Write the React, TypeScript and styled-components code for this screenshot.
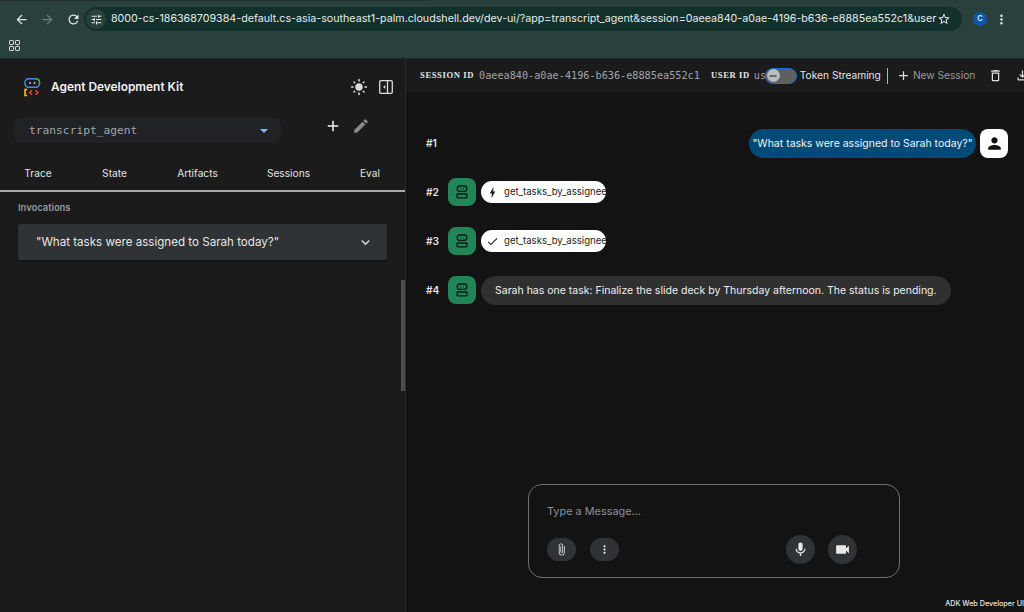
import React from "react";
import styled, { createGlobalStyle } from "styled-components";
import {
  MdArrowBack, MdArrowForward, MdRefresh, MdTune, MdStarBorder, MdMoreVert, MdAdd, MdEdit,
  MdOutlineDelete, MdOutlineFileDownload, MdMic, MdVideocam, MdAttachFile, MdKeyboardArrowDown,
  MdPerson, MdCheck, MdBolt, MdLightMode, MdRemove,
} from "react-icons/md";

const Global = createGlobalStyle`
  html, body { margin: 0; padding: 0; width: 1024px; height: 612px; overflow: hidden; background: #131314; }
  * { box-sizing: border-box; }
  body { font-family: "Inter", "Roboto", "Liberation Sans", sans-serif; }
`;

const Page = styled.div`
  width: 1024px; height: 612px; display: flex; flex-direction: column; overflow: hidden; position: relative;
`;
const BrowserChrome = styled.header`
  height: 59px; flex: none; background: #2a403d; display: flex; flex-direction: column; border-bottom: 1px solid #1d2a29;
`;
const TabEdge = styled.div`
  height: 1px; width: 430px; background: #1f2f2d; flex: none;
`;
const ToolbarRow = styled.div`
  height: 28px; margin-top: 4px; display: flex; align-items: center; padding: 0 0 0 8px; color: #dfe5e4;
`;
const NavButton = styled.span<{ $dim?: boolean }>`
  width: 26px; height: 24px; display: flex; align-items: center; justify-content: center; flex: none;
  color: ${p => (p.$dim ? "#71807e" : "#dfe5e4")}; font-size: 15px;
`;
const AddressBar = styled.div`
  margin-left: -2px; width: 878px; height: 24px; background: #12302c; border-radius: 12px; display: flex; align-items: center;
  padding-right: 11px; flex: none;
`;
const SiteChip = styled.span`
  width: 20px; height: 20px; margin-left: 2px; margin-right: 5px; border-radius: 50%; background: #2a403d; display: flex; align-items: center; justify-content: center;
  font-size: 13px; color: #e3e8e7; flex: none;
`;
const Url = styled.span`
  font: 400 10.7px/24px "Inter", sans-serif; color: #e6ebea; white-space: nowrap; flex: 1; overflow: hidden; letter-spacing: 0;
`;
const Star = styled.span`
  font-size: 14px; display: flex; color: #e6ebea;
`;
const ProfileChip = styled.span`
  margin-left: 11px; width: 14px; height: 14px; border-radius: 50%; background: #0b57a4; color: #dfeaf5; font: 600 7.5px/14px "Inter", sans-serif; text-align: center; flex: none;
`;
const Kebab = styled.span`
  margin-left: 7px; font-size: 15px; display: flex; color: #dfe5e4;
`;
const BookmarksRow = styled.div`
  height: 24px; display: flex; align-items: center; padding-left: 9px;
`;
const Body = styled.div`
  flex: 1; display: flex; min-height: 0;
`;
const Sidebar = styled.aside`
  width: 406px; flex: none; background: #1b1b1c; border-right: 1px solid #2c2c2d; display: flex; flex-direction: column; position: relative;
`;
const BrandRow = styled.div`
  height: 20px; margin-top: 18px; padding: 0 12px 0 24px; display: flex; align-items: center; color: #fff;
`;
const BrandTitle = styled.span`
  margin-left: 10px; font: 600 11.9px/20px "Inter", sans-serif; color: #f1f1f1; flex: 1;
`;
const SunIcon = styled.span`
  font-size: 18px; display: flex; color: #dcdcdc; margin-right: 11px;
`;
const AgentRow = styled.div`
  margin-top: 21px; padding-left: 14px; display: flex; align-items: flex-start;
`;
const AgentSelect = styled.div`
  width: 267px; height: 25px; border-radius: 8px; background: #212225; display: flex; align-items: center; justify-content: space-between; padding: 0 13px 0 15px;
`;
const AgentName = styled.span`
  font: 400 11.25px/25px "DejaVu Sans Mono", monospace; color: #a5a6a8;
`;
const Caret = styled.span`
  width: 0; height: 0; border-left: 4px solid transparent; border-right: 4px solid transparent; border-top: 4px solid #8ab4f8;
`;
const AgentActions = styled.div`
  margin-left: 42px; display: flex; gap: 8px; margin-top: -1px; align-items: center;
`;
const AgentIcon = styled.span<{ $muted?: boolean }>`
  font-size: 18px; display: flex; color: ${p => (p.$muted ? "#8a8a8a" : "#f2f2f2")}; width: 20px; justify-content: center;
`;
const Tabs = styled.nav`
  margin-top: 22px; height: 27px; display: grid; grid-template-columns: 76px 77px 89px 93px 70px; border-bottom: 2px solid #a9a9a9; flex: none; margin-right: 0;
`;
const TabLabel = styled.span`
  text-align: center; font: 400 10.2px/16px "Inter", sans-serif; color: #e3e3e3; padding-top: 0;
`;
const SectionTitle = styled.div`
  margin: 9px 0 0 18px; font: 600 9.4px/14px "Inter", sans-serif; color: #97989a;
`;
const Invocation = styled.div`
  margin: 9px 18px 0; height: 36px; background: #303335; border-radius: 2px; box-shadow: 0 1px 2px rgba(0,0,0,.5); display: flex; align-items: center; justify-content: space-between;
  padding: 0 13px 0 18px; font: 400 11.6px/36px "Inter", sans-serif; color: #e6e6e6;
`;
const InvocationCaret = styled.span`
  font-size: 17px; display: flex; color: #dcdcdc;
`;
const ScrollThumb = styled.div`
  position: absolute; right: 0; top: 221px; width: 4px; height: 111px; background: #4b4c4d;
`;
const Main = styled.main`
  flex: 1; min-width: 0; background: #131314; display: flex; flex-direction: column; position: relative;
`;
const SessionBar = styled.div`
  height: 33px; flex: none; background: #1b1b1c; display: flex; align-items: center; padding-left: 14px; overflow: hidden; white-space: nowrap;
`;
const MetaLabel = styled.span`
  font: 700 8.6px/33px "Liberation Serif", serif; letter-spacing: .6px; color: #e8e8e8; text-transform: uppercase;
`;
const SessionValue = styled.span`
  margin-left: 5px; width: 232px; flex: none; font: 400 10.2px/33px "DejaVu Sans Mono", monospace; color: #a3a4a6;
`;
const UserValue = styled.span`
  margin-left: 4px; font: 400 10.2px/33px "DejaVu Sans Mono", monospace; color: #a3a4a6; width: 11px; overflow: hidden; flex: none;
`;
const Toggle = styled.span`
  width: 32px; height: 16px; border-radius: 8px; border: 1.5px solid #1a6fd4; background: #5d5f62; flex: none; display: flex; align-items: center; padding-left: 1px;
`;
const ToggleKnob = styled.span`
  width: 13px; height: 13px; border-radius: 50%; background: #b9bbbe; color: #1b1b1c; font-size: 12px; display: flex; align-items: center; justify-content: center;
`;
const BarText = styled.span<{ $muted?: boolean }>`
  font: 400 10.2px/33px "Inter", sans-serif; color: ${p => (p.$muted ? "#9a9b9d" : "#e4e4e4")}; flex: none;
`;
const BarDivider = styled.span`
  width: 1px; height: 16px; background: #b5b5b5; flex: none; margin: 0 8px 0 6px;
`;
const BarIcon = styled.span<{ $muted?: boolean }>`
  display: flex; font-size: 15px; flex: none; color: ${p => (p.$muted ? "#a8a9ab" : "#dcdcdc")};
`;
const Conversation = styled.div`
  flex: 1; padding: 37px 16px 0 20px; display: flex; flex-direction: column; gap: 21px; min-height: 0;
`;
const MessageRow = styled.div`
  display: flex; align-items: center; height: 28px;
`;
const Index = styled.span`
  width: 22px; flex: none; font: 600 10.2px/28px "Inter", sans-serif; color: #e4e4e4;
`;
const BotAvatar = styled.span`
  width: 28px; height: 28px; border-radius: 8px; background: #218558; flex: none; display: flex; align-items: center; justify-content: center; margin-right: 5px;
`;
const ToolPill = styled.span`
  height: 22px; width: 125px; border-radius: 11px; background: #fff; color: #1c1c1c; display: flex; align-items: center; padding-left: 5px; font: 400 9.6px/22px "Inter", sans-serif; margin-left: 0;
`;
const PillIcon = styled.span`
  width: 16px; margin-right: 5px; font-size: 13px; display: flex; justify-content: center;
`;
const BotBubble = styled.span`
  height: 29px; border-radius: 14.5px; background: #303030; color: #eeeeee; padding: 0 14px; display: flex; align-items: center; font: 400 10.5px/29px "Inter", sans-serif; white-space: nowrap;
`;
const UserGap = styled.span`
  flex: 1;
`;
const UserBubble = styled.span`
  height: 29px; width: 227px; border-radius: 14.5px; background: #004a77; color: #eef4f8; display: flex; align-items: center; justify-content: center; font: 400 10.5px/29px "Inter", sans-serif; white-space: nowrap;
`;
const UserAvatar = styled.span`
  width: 28px; height: 29px; border-radius: 8px; background: #fff; color: #111; margin-left: 4px; display: flex; align-items: center; justify-content: center; font-size: 19px;
`;
const Composer = styled.div`
  align-self: center; margin-bottom: 34px; width: 372px; height: 94px; border: 1px solid #6f6f6f; border-radius: 14px; padding: 17px 18px 0; flex: none; transform: translateX(-1px);
`;
const Placeholder = styled.div`
  font: 400 10.9px/18px "Inter", sans-serif; color: #8f8f90;
`;
const ComposerTools = styled.div`
  margin-top: 15px; display: flex; align-items: center;
`;
const RoundButton = styled.span<{ $big?: boolean }>`
  width: 29px; height: ${p => (p.$big ? 29 : 23)}px; border-radius: 15px; background: #303335; color: #e8e8e8; display: flex; align-items: center; justify-content: center; font-size: ${p => (p.$big ? 17 : 13)}px; flex: none;
`;
const LeftTools = styled.div`
  display: flex; gap: 14px; flex: 1;
`;
const RightTools = styled.div`
  display: flex; gap: 13px; margin-right: 24px;
`;
const FooterNote = styled.span`
  position: absolute; right: 0; bottom: 3px; font: 500 7.2px/10px "Inter", sans-serif; color: #e8e8e8; white-space: nowrap;
`;

const Logo = () => (
  <svg width="17" height="19" viewBox="0 0 17 19" fill="none">
    <rect x="1" y="0.8" width="14.5" height="8.4" rx="3.6" stroke="#4f86ec" strokeWidth="1.5" />
    <path d="M11 .8h1.5a3.6 3.6 0 0 1 3 3.6v1" stroke="#35a853" strokeWidth="1.5" />
    <circle cx="6" cy="5" r=".9" fill="#cfd8e6" /><circle cx="10.5" cy="5" r=".9" fill="#cfd8e6" />
    <path d="M3.2 11.5H1v6h2.2" stroke="#fbbc04" strokeWidth="1.6" />
    <path d="M8 12.2 5.6 14.5 8 16.8" stroke="#ea4335" strokeWidth="1.5" />
    <path d="M11.5 12.2 13.9 14.5 11.5 16.8" stroke="#ea4335" strokeWidth="1.5" />
  </svg>
);
const GridIcon = () => (
  <svg width="11" height="11" viewBox="0 0 11 11" fill="none" stroke="#d9dfde" strokeWidth="1">
    <rect x=".5" y=".5" width="4" height="4" rx=".6" /><rect x="6.5" y=".5" width="4" height="4" rx=".6" />
    <rect x=".5" y="6.5" width="4" height="4" rx=".6" /><rect x="6.5" y="6.5" width="4" height="4" rx=".6" />
  </svg>
);
const PanelIcon = () => (
  <svg width="14" height="14" viewBox="0 0 14 14" fill="none">
    <rect x=".7" y=".7" width="12.6" height="12.6" rx="1.2" stroke="#dcdcdc" strokeWidth="1.3" />
    <path d="M8.5 1v12" stroke="#dcdcdc" strokeWidth="1.3" />
    <path d="M6.3 5 4 7l2.3 2z" fill="#dcdcdc" />
  </svg>
);
const BotIcon = () => (
  <svg width="12" height="14" viewBox="0 0 12 14" fill="none" stroke="#0d1a14" strokeWidth="1.3">
    <rect x="1.2" y="1" width="9.6" height="5.4" rx="2.4" />
    <rect x="1" y="9" width="10" height="3.8" rx=".8" />
    <path d="M4 3.7h.6M7.4 3.7H8" strokeWidth="1.4" />
  </svg>
);

const toolName = "get_tasks_by_assignee";
const question = "\"What tasks were assigned to Sarah today?\"";

export default function App() {
  return (
    <Page>
      <Global />
      <BrowserChrome>
        <TabEdge />
        <ToolbarRow>
          <NavButton><MdArrowBack /></NavButton>
          <NavButton $dim><MdArrowForward /></NavButton>
          <NavButton><MdRefresh /></NavButton>
          <AddressBar>
            <SiteChip><MdTune /></SiteChip>
            <Url>8000-cs-186368709384-default.cs-asia-southeast1-palm.cloudshell.dev/dev-ui/?app=transcript_agent&amp;session=0aeea840-a0ae-4196-b636-e8885ea552c1&amp;userId=user</Url>
            <Star><MdStarBorder /></Star>
          </AddressBar>
          <ProfileChip>C</ProfileChip>
          <Kebab><MdMoreVert /></Kebab>
        </ToolbarRow>
        <BookmarksRow><GridIcon /></BookmarksRow>
      </BrowserChrome>
      <Body>
        <Sidebar>
          <BrandRow>
            <Logo />
            <BrandTitle>Agent Development Kit</BrandTitle>
            <SunIcon><MdLightMode /></SunIcon>
            <PanelIcon />
          </BrandRow>
          <AgentRow>
            <AgentSelect>
              <AgentName>transcript_agent</AgentName>
              <Caret />
            </AgentSelect>
            <AgentActions>
              <AgentIcon><MdAdd /></AgentIcon>
              <AgentIcon $muted><MdEdit /></AgentIcon>
            </AgentActions>
          </AgentRow>
          <Tabs>
            <TabLabel>Trace</TabLabel>
            <TabLabel>State</TabLabel>
            <TabLabel>Artifacts</TabLabel>
            <TabLabel>Sessions</TabLabel>
            <TabLabel>Eval</TabLabel>
          </Tabs>
          <SectionTitle>Invocations</SectionTitle>
          <Invocation>
            {question}
            <InvocationCaret><MdKeyboardArrowDown /></InvocationCaret>
          </Invocation>
          <ScrollThumb />
        </Sidebar>
        <Main>
          <SessionBar>
            <MetaLabel>Session ID</MetaLabel>
            <SessionValue>0aeea840-a0ae-4196-b636-e8885ea552c1</SessionValue>
            <MetaLabel>User ID</MetaLabel>
            <UserValue>user</UserValue>
            <Toggle><ToggleKnob><MdRemove /></ToggleKnob></Toggle>
            <BarText style={{ marginLeft: 3 }}>Token Streaming</BarText>
            <BarDivider />
            <BarIcon><MdAdd /></BarIcon>
            <BarText $muted style={{ marginLeft: 2 }}>New Session</BarText>
            <BarIcon style={{ marginLeft: 13 }}><MdOutlineDelete /></BarIcon>
            <BarIcon style={{ marginLeft: 12 }}><MdOutlineFileDownload /></BarIcon>
          </SessionBar>
          <Conversation>
            <MessageRow>
              <Index>#1</Index>
              <UserGap />
              <UserBubble>{question}</UserBubble>
              <UserAvatar><MdPerson /></UserAvatar>
            </MessageRow>
            <MessageRow>
              <Index>#2</Index>
              <BotAvatar><BotIcon /></BotAvatar>
              <ToolPill><PillIcon><MdBolt /></PillIcon>{toolName}</ToolPill>
            </MessageRow>
            <MessageRow>
              <Index>#3</Index>
              <BotAvatar><BotIcon /></BotAvatar>
              <ToolPill><PillIcon><MdCheck /></PillIcon>{toolName}</ToolPill>
            </MessageRow>
            <MessageRow>
              <Index>#4</Index>
              <BotAvatar><BotIcon /></BotAvatar>
              <BotBubble>Sarah has one task: Finalize the slide deck by Thursday afternoon. The status is pending.</BotBubble>
            </MessageRow>
          </Conversation>
          <Composer>
            <Placeholder>Type a Message...</Placeholder>
            <ComposerTools>
              <LeftTools>
                <RoundButton><MdAttachFile /></RoundButton>
                <RoundButton><MdMoreVert /></RoundButton>
              </LeftTools>
              <RightTools>
                <RoundButton $big><MdMic /></RoundButton>
                <RoundButton $big><MdVideocam /></RoundButton>
              </RightTools>
            </ComposerTools>
          </Composer>
          <FooterNote>ADK Web Developer UI</FooterNote>
        </Main>
      </Body>
    </Page>
  );
}
